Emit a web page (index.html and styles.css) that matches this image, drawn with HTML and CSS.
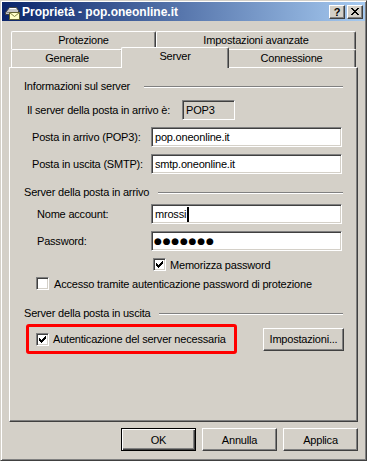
FILE: index.html
```html
<!DOCTYPE html>
<html lang="it">
<head>
  <meta charset="UTF-8">
  <title>Proprietà - pop.oneonline.it</title>
  <link rel="stylesheet" href="styles.css">
</head>
<body>

<div class="window">
  <div class="titlebar">
    <svg class="app-icon" width="16" height="16" viewBox="0 0 16 16">
      <path d="M1.5 8.5 L5.5 3.5 H12.5 L14.5 6.5 V10.5 H1.5 Z" fill="#c8c8c8" stroke="#404040"/>
      <path d="M2.5 8.5 H13.5" stroke="#808080"/>
      <path d="M5.5 4.5 H12" stroke="#ffffff"/>
      <rect x="5.5" y="8.5" width="10" height="7" fill="#ffffc8" stroke="#606030"/>
      <path d="M5.5 8.5 L10.5 12.5 L15.5 8.5" fill="none" stroke="#808040"/>
    </svg>
    <span class="title-text">Proprietà - pop.oneonline.it</span>
    <div class="caption-buttons">
      <div class="cap-btn">?</div>
      <div class="cap-btn">
        <svg width="8" height="7" viewBox="0 0 8 7" shape-rendering="crispEdges">
          <path d="M0 0h2v1H0z M6 0h2v1H6z M1 1h2v1H1z M5 1h2v1H5z M2 2h4v1H2z M3 3h2v1H3z M2 4h4v1H2z M1 5h2v1H1z M5 5h2v1H5z M0 6h2v1H0z M6 6h2v1H6z" fill="#000"/>
        </svg>
      </div>
    </div>
  </div>

  <div class="dialog">
    <div class="tab-row">
      <div class="tab tab-protezione">Protezione</div>
      <div class="tab tab-avanzate">Impostazioni avanzate</div>
    </div>
    <div class="tab-row tab-row-front">
      <div class="tab tab-generale">Generale</div>
      <div class="tab tab-server active">Server</div>
      <div class="tab tab-connessione">Connessione</div>
    </div>

    <div class="panel">
      <div class="section-head">
        <span>Informazioni sul server</span>
        <div class="sep sep-info"></div>
      </div>

      <div class="form-row info-row">
        <label>Il server della posta in arrivo è:</label>
        <div class="field readonly">POP3</div>
      </div>
      <div class="form-row">
        <label>Posta in arrivo (POP3):</label>
        <div class="field">pop.oneonline.it</div>
      </div>
      <div class="form-row">
        <label>Posta in uscita (SMTP):</label>
        <div class="field">smtp.oneonline.it</div>
      </div>

      <div class="section-head section-gap">
        <span>Server della posta in arrivo</span>
        <div class="sep"></div>
      </div>

      <div class="form-row account-row row-tight">
        <label>Nome account:</label>
        <div class="field">mrossi<span class="ibeam"></span></div>
      </div>
      <div class="form-row account-row">
        <label>Password:</label>
        <div class="field password">●●●●●●●</div>
      </div>

      <div class="check-row remember-row">
        <span class="checkbox checked">
          <svg width="7" height="7" viewBox="0 0 7 7" shape-rendering="crispEdges">
            <path d="M0 2h1v3H0z M1 3h1v3H1z M2 4h1v3H2z M3 3h1v3H3z M4 2h1v3H4z M5 1h1v3H5z M6 0h1v3H6z" fill="#000"/>
          </svg>
        </span>
        <span>Memorizza password</span>
      </div>
      <div class="check-row spa-row">
        <span class="checkbox"></span>
        <span>Accesso tramite autenticazione password di protezione</span>
      </div>

      <div class="section-head section-gap-big">
        <span>Server della posta in uscita</span>
        <div class="sep"></div>
      </div>

      <div class="auth-row">
        <div class="highlight">
          <span class="checkbox checked">
            <svg width="7" height="7" viewBox="0 0 7 7" shape-rendering="crispEdges">
              <path d="M0 2h1v3H0z M1 3h1v3H1z M2 4h1v3H2z M3 3h1v3H3z M4 2h1v3H4z M5 1h1v3H5z M6 0h1v3H6z" fill="#000"/>
            </svg>
          </span>
          <span>Autenticazione del server necessaria</span>
        </div>
        <button class="btn btn-settings">Impostazioni...</button>
      </div>
    </div>

    <div class="dialog-buttons">
      <button class="btn btn-default">OK</button>
      <button class="btn">Annulla</button>
      <button class="btn">Applica</button>
    </div>
  </div>
</div>

</body>
</html>
```

FILE: styles.css
```css
* {
  box-sizing: border-box;
}

body {
  margin: 0;
  font-family: "Liberation Sans", Arial, sans-serif;
  font-size: 11px;
  letter-spacing: -0.2px;
  color: #000;
  background-color: #d4d0c8;
}

.window {
  width: 367px;
  height: 461px;
  background-color: #d4d0c8;
  border: 1px solid;
  border-color: #d4d0c8 #404040 #404040 #d4d0c8;
  box-shadow: inset 1px 1px #fff, inset -1px -1px #808080;
  padding: 1px;
}

/* title bar */
.titlebar {
  height: 19px;
  display: flex;
  align-items: center;
  padding: 0 2px;
  background: linear-gradient(to right, #0a246a, #a6caf0);
}

.app-icon {
  display: block;
  margin-right: 2px;
}

.title-text {
  color: #fff;
  font-weight: bold;
  font-size: 12px;
  letter-spacing: 0;
  white-space: nowrap;
}

.caption-buttons {
  margin-left: auto;
  display: flex;
  gap: 2px;
}

.cap-btn {
  width: 16px;
  height: 14px;
  display: flex;
  align-items: center;
  justify-content: center;
  background-color: #d4d0c8;
  border: 1px solid;
  border-color: #fff #404040 #404040 #fff;
  box-shadow: inset -1px -1px #808080;
  font-weight: bold;
  font-size: 11px;
  line-height: 12px;
}

/* tabs */
.dialog {
  padding: 10px 0 0 7px;
}

.tab-row {
  display: flex;
  align-items: flex-end;
  height: 18px;
  margin-left: 2px;
}

.tab {
  height: 18px;
  line-height: 17px;
  text-align: center;
  background-color: #d4d0c8;
  border-top: 1px solid #fff;
  border-left: 1px solid #fff;
  border-right: 1px solid #404040;
  box-shadow: inset -1px 0 #808080;
  border-radius: 2px 2px 0 0;
  white-space: nowrap;
}

.tab-protezione { width: 145px; }
.tab-avanzate { width: 200px; }
.tab-generale { width: 112px; }
.tab-connessione { width: 129px; }

.tab-server {
  width: 108px;
  height: 21px;
  line-height: 16px;
  margin: 0 -2px -1px -2px;
  position: relative;
  z-index: 2;
}

/* panel */
.panel {
  width: 349px;
  height: 355px;
  border: 1px solid;
  border-color: #fff #404040 #404040 #fff;
  box-shadow: inset -1px -1px #808080;
  padding: 12px 14px 0 14px;
}

.section-head {
  display: flex;
  align-items: center;
  height: 13px;
  line-height: 13px;
}

.sep {
  flex: 1;
  margin-left: 9px;
  border-top: 1px solid #808080;
  border-bottom: 1px solid #fff;
}

.sep-info {
  margin-left: 14px;
}

.section-gap {
  margin-top: 12px;
}

.section-gap-big {
  margin-top: 17px;
}

.form-row {
  display: grid;
  grid-template-columns: 127px 191px;
  align-items: center;
  height: 20px;
  margin-top: 6px;
}

.form-row + .form-row {
  margin-top: 7px;
}

.form-row label {
  padding-left: 8px;
  white-space: nowrap;
}

.info-row {
  grid-template-columns: 158px 53px;
  margin-top: 7px;
}

.info-row label {
  padding-left: 3px;
}

.account-row label {
  padding-left: 13px;
}

.row-tight {
  margin-top: 5px;
}

.field {
  height: 20px;
  display: flex;
  align-items: center;
  padding-left: 3px;
  background-color: #fff;
  border: 1px solid;
  border-color: #808080 #fff #fff #808080;
  box-shadow: inset 1px 1px #404040, inset -1px -1px #d4d0c8;
  white-space: nowrap;
}

.field.readonly {
  background-color: #d4d0c8;
}

.field.password {
  font-family: "DejaVu Sans", sans-serif;
  font-size: 9px;
  letter-spacing: 0.8px;
  padding-left: 2px;
}

.ibeam {
  display: inline-block;
  width: 2px;
  height: 15px;
  margin-left: 1px;
  background-color: #000;
}

/* checkboxes */
.check-row {
  display: flex;
  align-items: center;
  height: 13px;
  white-space: nowrap;
}

.remember-row {
  margin-top: 7px;
  padding-left: 129px;
  gap: 4px;
}

.spa-row {
  margin-top: 6px;
  padding-left: 12px;
  gap: 5px;
}

.checkbox {
  width: 13px;
  height: 13px;
  flex: none;
  display: flex;
  align-items: center;
  justify-content: center;
  background-color: #fff;
  border: 1px solid;
  border-color: #808080 #fff #fff #808080;
  box-shadow: inset 1px 1px #404040, inset -1px -1px #d4d0c8;
}

.checkbox svg {
  display: block;
}

/* outgoing server */
.auth-row {
  display: flex;
  align-items: center;
  justify-content: space-between;
  margin-top: 4px;
}

.highlight {
  width: 211px;
  height: 30px;
  margin-left: 2px;
  display: flex;
  align-items: center;
  gap: 4px;
  padding-left: 7px;
  border: 3px solid #ff0000;
  border-radius: 3px;
  white-space: nowrap;
}

/* buttons */
.btn {
  width: 75px;
  height: 23px;
  padding: 0;
  font-family: "Liberation Sans", Arial, sans-serif;
  font-size: 11px;
  letter-spacing: -0.2px;
  color: #000;
  background-color: #d4d0c8;
  border: 1px solid;
  border-color: #fff #404040 #404040 #fff;
  box-shadow: inset -1px -1px #808080;
  border-radius: 0;
}

.btn-settings {
  width: 81px;
  margin-right: -1px;
}

.btn-default {
  border: 1px solid #000;
  box-shadow: inset 1px 1px #fff, inset -1px -1px #404040, inset -2px -2px #808080;
}

.dialog-buttons {
  width: 349px;
  display: flex;
  justify-content: flex-end;
  gap: 6px;
  margin-top: 6px;
}
```
